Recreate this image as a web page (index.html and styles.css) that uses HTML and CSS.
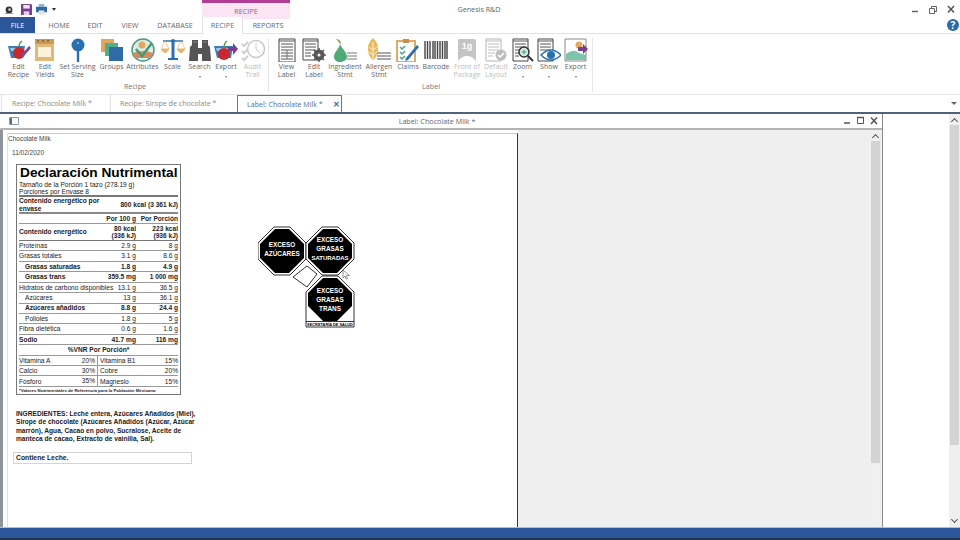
FILE: index.html
```html
<!DOCTYPE html>
<html lang="en">

<head>
    <meta charset="UTF-8">
    <meta name="viewport" content="width=device-width, initial-scale=1.0">
    <title>Genesis R&amp;D</title>
    <link rel="stylesheet" href="styles.css">
</head>

<body>
    <div class="app">
        <div class="titlebar">
            <div class="qat">
                <svg class="qat-logo" viewBox="0 0 8 8"><circle cx="4" cy="4" r="3.4" fill="#333"/><circle cx="4.6" cy="3.6" r="1.3" fill="#cfd8e6"/><path d="M0 7.5h8" stroke="#b9913f"/></svg>
                <svg class="qat-save" viewBox="0 0 12 12"><path d="M0 0h11l1 1v11H0z" fill="#7a3e8e"/><path d="M2.500 1h7v4h-7z" fill="#f1e6f5"/><path d="M3 8h6v4H3z" fill="#e4d3ea"/></svg>
                <svg class="qat-print" viewBox="0 0 12 12"><path d="M3 0h6v3H3z" fill="#8fb4d6"/><path d="M0 3h12v6H0z" fill="#2f6ca6"/><path d="M3 7h6v5H3z" fill="#dfe5ea"/></svg>
                <span class="qat-arrow"></span>
            </div>
            <div class="context-tab">RECIPE</div>
            <div class="app-title">Genesis R&amp;D</div>
            <div class="win-buttons">
                <svg viewBox="-1 0 54 10"><path d="M5 6.500h6" stroke="#666" stroke-width="1.500"/><path d="M22.500 3.500h5v5h-5zM24.500 3.500v-2h5v5h-2" fill="none" stroke="#666"/><path d="M41 1l6 6.500M47 1l-6 6.500" stroke="#555" stroke-width="1.500"/></svg>
            </div>
        </div>

        <div class="tabs">
            <div class="tab tab-file">FILE</div>
            <div class="tab tab-home">HOME</div>
            <div class="tab tab-edit">EDIT</div>
            <div class="tab tab-view">VIEW</div>
            <div class="tab tab-database">DATABASE</div>
            <div class="tab tab-recipe">RECIPE</div>
            <div class="tab tab-reports">REPORTS</div>
            <div class="help">?</div>
        </div>

        <div class="ribbon">
            <div class="group group-recipe">
                <div class="buttons">
                    <div class="rb w27">
                        <svg class="ic" viewBox="0 0 24 24"><path d="M1 8h17l-2 12H4z" fill="#3c7fb8"/><path d="M3 10h13l-1 3H4z" fill="#9cc7e6"/><circle cx="12" cy="15" r="6" fill="#c8282e"/><path d="M12 9q0-4 3-6" stroke="#5d9b4c" stroke-width="1.500" fill="none"/><path d="M15 16l7-8 2 2-7 8-3 1z" fill="#6f4f9a"/></svg>
                        <span>Edit<br>Recipe</span>
                    </div>
                    <div class="rb w26">
                        <svg class="ic" viewBox="0 0 24 24"><path d="M2 1h19v22H2z" fill="#e2b878"/><path d="M2 1h19v5H2z" fill="#c99a57"/><path d="M5 9h13v10H5z" fill="#fdf3dc"/><path d="M4 3h2M9 3h2M14 3h2" stroke="#5b4527"/></svg>
                        <span>Edit<br>Yields</span>
                    </div>
                    <div class="rb w39">
                        <svg class="ic" viewBox="0 0 24 24"><circle cx="12" cy="7" r="6.500" fill="#2a6fb0"/><path d="M10.800 12h2.400v12h-2.400z" fill="#2a6fb0"/><circle cx="12" cy="5" r="1" fill="#9cc7e6"/></svg>
                        <span>Set Serving<br>Size</span>
                    </div>
                    <div class="rb w29">
                        <svg class="ic" viewBox="0 0 24 24"><path d="M1 1h13v13H1z" fill="#e0a75e"/><path d="M5 5h13v13H5z" fill="#4fae8b"/><path d="M9 9h14v14H9z" fill="#2f6ca6"/></svg>
                        <span>Groups</span>
                    </div>
                    <div class="rb w33">
                        <svg class="ic" viewBox="0 0 24 24"><circle cx="12" cy="12" r="11" fill="#dcebe4" stroke="#4f9a85" stroke-width="1.500"/><circle cx="11" cy="7" r="3.500" fill="#e3a95b"/><path d="M2 15q10-4 20 0l-2 5H4z" fill="#d98a5a"/><path d="M5 11l6 7 10-13" fill="none" stroke="#3f9a78" stroke-width="2.500"/></svg>
                        <span>Attributes</span>
                    </div>
                    <div class="rb w27">
                        <svg class="ic" viewBox="0 0 24 24"><path d="M2 3h20" stroke="#2a6fb0" stroke-width="1.500"/><path d="M10.500 2h3v18h-3zM7 20h10v2H7z" fill="#2a6fb0"/><circle cx="12" cy="3" r="2" fill="#2a6fb0"/><path d="M0 11h8q-4 7-8 0zM16 11h8q-4 7-8 0z" fill="#e8b468" stroke="#e8b468"/><path d="M4 3l-4 8M4 3l4 8M20 3l-4 8M20 3l4 8" stroke="#e8b468" stroke-width=".7"/></svg>
                        <span>Scale</span>
                    </div>
                    <div class="rb w27 more">
                        <svg class="ic" viewBox="0 0 24 24"><path d="M1 23l1-14 2-2V2h6v8h4V2h6v5l2 2 1 14h-9v-7h-4v7z" fill="#555"/><path d="M5 4h4M15 4h4" stroke="#888"/></svg>
                        <span>Search</span>
                    </div>
                    <div class="rb w26 more">
                        <svg class="ic" viewBox="0 0 24 24"><path d="M0 8h19l-2 12H3z" fill="#3c7fb8"/><path d="M2 10h14l-1 3H3z" fill="#9cc7e6"/><circle cx="10" cy="16" r="6" fill="#c8282e"/><path d="M10 10q0-5 3-7" stroke="#5d9b4c" stroke-width="1.500" fill="none"/><path d="M14 9h5V5l5 6-5 6v-4h-5z" fill="#7a3e8e"/></svg>
                        <span>Export</span>
                    </div>
                    <div class="rb w27 off">
                        <svg class="ic" viewBox="0 0 24 24"><circle cx="15" cy="11" r="8.500" fill="#fff" stroke="#c8c8c8" stroke-width="1.500"/><path d="M15 5v6l4 4" fill="none" stroke="#c8c8c8"/><path d="M1 6l2 2 4-4M1 13l2 2 4-4M1 20l2 2 4-4" fill="none" stroke="#cdd2c8" stroke-width="2"/></svg>
                        <span>Audit<br>Trail</span>
                    </div>
                </div>
                <div class="group-name">Recipe</div>
            </div>

            <div class="group group-label">
                <div class="buttons">
                    <div class="rb w27">
                        <svg class="ic" viewBox="0 0 24 24"><path d="M4 1h16v23H4z" fill="#fff" stroke="#444"/><path d="M4 3h16M6 6h12M6 9h12M6 12h12M6 15h12M6 18h12M6 21h12" stroke="#555"/><path d="M12 12v9" stroke="#777"/></svg>
                        <span>View<br>Label</span>
                    </div>
                    <div class="rb w28">
                        <svg class="ic" viewBox="0 0 24 24"><path d="M1 1h15v21H1z" fill="#fff" stroke="#444"/><path d="M1 3h15M3 6h11M3 9h11M3 12h11M3 15h6M3 18h6" stroke="#555"/><circle cx="17" cy="17" r="4" fill="none" stroke="#555" stroke-width="3"/><path d="M17 10v14M10 17h14M12 12l10 10M22 12L12 22" stroke="#555" stroke-width="1.500"/><circle cx="17" cy="17" r="1.500" fill="#fff"/></svg>
                        <span>Edit<br>Label</span>
                    </div>
                    <div class="rb w34">
                        <svg class="ic" viewBox="0 0 24 24"><path d="M7 6c-1 5-6 8-6 13 0 3 3 5 6 5s7-2 7-5c0-5-5-8-7-13z" fill="#4faa78"/><path d="M7 6Q5 3 3 1q4 0 5 4" fill="#8ea84c"/><path d="M14 15h10M14 18h10M14 21h10" stroke="#777" stroke-width="1.200"/></svg>
                        <span>Ingredient<br>Stmt</span>
                    </div>
                    <div class="rb w34">
                        <svg class="ic" viewBox="0 0 24 24"><path d="M6 0c4 4 5 7 5 10 0 6-2 10-5 12-3-2-5-6-5-12 0-3 1-6 5-10z" fill="#e9b95e"/><path d="M6 4v17M2 9l4 3 4-3M2 14l4 3 4-3" stroke="#fff3d4" fill="none"/><path d="M10 15h14M10 18h14M10 21h14" stroke="#555"/></svg>
                        <span>Allergen<br>Stmt</span>
                    </div>
                    <div class="rb w24">
                        <svg class="ic" viewBox="0 0 24 24"><path d="M1 3h18v21H1z" fill="#fff" stroke="#e0aa66" stroke-width="2"/><path d="M7 1h6v4H7z" fill="#c98f4a"/><path d="M4 9l2 2 3-3M4 14l2 2 3-3M4 19l2 2 3-3" fill="none" stroke="#4aa08a" stroke-width="1.500"/><path d="M10 20l11-13 2 2-11 13-3 1z" fill="#2a6fb0"/></svg>
                        <span>Claims</span>
                    </div>
                    <div class="rb w32">
                        <svg class="ic" viewBox="0 0 24 24"><path d="M1 3v18M3.500 3v18M6 3v18M9 3v18M11 3v18M13.500 3v18M16 3v18M18.500 3v18M21 3v18M23 3v18" stroke="#444" stroke-width="1.400"/></svg>
                        <span>Barcode</span>
                    </div>
                    <div class="rb w30 off">
                        <svg class="ic" viewBox="0 0 24 24"><path d="M4 1h15q2 0 2 2v20q-4-5-9-5t-9 5V3q0-2 1-2z" fill="#c4c4c4"/><text class="ic-1g" x="12" y="11" text-anchor="middle">1g</text></svg>
                        <span>Front of<br>Package</span>
                    </div>
                    <div class="rb w28 off">
                        <svg class="ic" viewBox="0 0 24 24"><path d="M2 1h15v22H2z" fill="#fff" stroke="#b5b5b5"/><path d="M2 3h15M4 6h11M4 9h11M4 12h11M4 15h7M4 18h5" stroke="#bdbdbd"/><circle cx="17" cy="17" r="5.500" fill="#bdbdbd"/><path d="M14 17l2 2 4-4" stroke="#fff" stroke-width="1.500" fill="none"/></svg>
                        <span>Default<br>Layout</span>
                    </div>
                    <div class="rb w25 more">
                        <svg class="ic" viewBox="0 0 24 24"><path d="M2 1h15v22H2z" fill="#fff" stroke="#444"/><path d="M2 3h15M4 6h11M4 9h11M4 12h5M4 15h4M4 18h4" stroke="#555"/><circle cx="13" cy="14" r="5" fill="#d9eee6" stroke="#333" stroke-width="1.500"/><path d="M13 11.500v5M10.500 14h5" stroke="#3f9a78"/><path d="M17 18l5 5" stroke="#333" stroke-width="2"/></svg>
                        <span>Zoom</span>
                    </div>
                    <div class="rb w28 more">
                        <svg class="ic" viewBox="0 0 24 24"><path d="M1 1h15v22H1z" fill="#fff" stroke="#444"/><path d="M1 3h15M3 6h11M3 9h11M3 12h11" stroke="#555"/><path d="M4 17q10-10 20 0-10 10-20 0z" fill="#fff" stroke="#2a6fb0" stroke-width="1.500"/><circle cx="14" cy="17" r="4" fill="#2a6fb0"/></svg>
                        <span>Show</span>
                    </div>
                    <div class="rb w25 more">
                        <svg class="ic" viewBox="0 0 24 24"><path d="M1 1h21v22H1z" fill="#fff" stroke="#888"/><circle cx="15" cy="7" r="3.500" fill="#e3a95b"/><path d="M2 22v-6q8-6 13-1l7 2v5z" fill="#7cc4ac"/><path d="M14 9h5V6l5 5-5 5v-3h-5z" fill="#7a3e8e"/></svg>
                        <span>Export</span>
                    </div>
                </div>
                <div class="group-name">Label</div>
            </div>
        </div>

        <div class="doc-tabs">
            <div class="doc-tab doc-tab-1">Recipe: Chocolate Milk *</div>
            <div class="doc-tab doc-tab-2">Recipe: Sirope de chocolate *</div>
            <div class="doc-tab doc-tab-3">Label: Chocolate Milk *<span class="doc-close">&#10005;</span></div>
            <span class="doc-arrow"></span>
        </div>

        <div class="main">
            <div class="mdi">
                <div class="mdi-head">
                    <svg class="mdi-icon" viewBox="0 0 10 8"><path d="M.5.500h9v7h-9z" fill="#fff" stroke="#8a97a5"/><path d="M2 1v6" stroke="#5b6b7d" stroke-width="2"/></svg>
                    <span class="mdi-title">Label: Chocolate Milk *</span>
                    <svg class="mdi-btns" viewBox="0 0 36 10"><path d="M0 7h6" stroke="#555" stroke-width="1.500"/><path d="M13.500 1.500h6v6h-6z" fill="none" stroke="#555"/><path d="M13 1.500h7" stroke="#555" stroke-width="1.500"/><path d="M27 1.500l6 6.500M33 1.500L27 8" stroke="#555" stroke-width="1.500"/></svg>
                </div>
                <div class="mdi-body">
                    <div class="gutter"></div>
                    <div class="sheet">
                        <div class="sheet-name">Chocolate Milk</div>
                        <div class="sheet-date">11/02/2020</div>
                        <div class="sheet-cols">
                            <div class="sheet-left">
                                <div class="facts">
                                    <div class="facts-title">Declaración Nutrimental</div>
                                    <div class="facts-serv">Tamaño de la Porción 1 tazo (278.19 g)<br>Porciones por Envase 8</div>
                                    <div class="row row-energy b"><div>Contenido energético por<br>envase</div><div>800 kcal (3 361 kJ)</div></div>
                                    <div class="row row-head b"><div></div><div>Por 100 g</div><div>Por Porción</div></div>
                                    <div class="row row-kcal b"><div>Contenido energético</div><div>80 kcal<br>(336 kJ)</div><div>223 kcal<br>(936 kJ)</div></div>
                                    <div class="row"><div>Proteínas</div><div>2.9 g</div><div>8 g</div></div>
                                    <div class="row"><div>Grasas totales</div><div>3.1 g</div><div>8.6 g</div></div>
                                    <div class="row b in"><div>Grasas saturadas</div><div>1.8 g</div><div>4.9 g</div></div>
                                    <div class="row b in"><div>Grasas trans</div><div>359.5 mg</div><div>1 000 mg</div></div>
                                    <div class="row"><div>Hidratos de carbono disponibles</div><div>13.1 g</div><div>36.5 g</div></div>
                                    <div class="row in"><div>Azúcares</div><div>13 g</div><div>36.1 g</div></div>
                                    <div class="row b in"><div>Azúcares añadidos</div><div>8.8 g</div><div>24.4 g</div></div>
                                    <div class="row in"><div>Polioles</div><div>1.8 g</div><div>5 g</div></div>
                                    <div class="row"><div>Fibra dietética</div><div>0.6 g</div><div>1.6 g</div></div>
                                    <div class="row b"><div>Sodio</div><div>41.7 mg</div><div>116 mg</div></div>
                                    <div class="row-vnr">%VNR Por Porción*</div>
                                    <div class="row row-vit"><div>Vitamina A</div><div class="pct">20%</div><div>Vitamina B1</div><div>15%</div></div>
                                    <div class="row row-vit"><div>Calcio</div><div class="pct">30%</div><div>Cobre</div><div>20%</div></div>
                                    <div class="row row-vit"><div>Fósforo</div><div class="pct">35%</div><div>Magnesio</div><div>15%</div></div>
                                    <div class="facts-note">*Valores Nutrimentales de Referencia para la Población Mexicana</div>
                                </div>
                                <div class="ingredients">INGREDIENTES: Leche entera, Azúcares Añadidos (Miel),<br>Sirope de chocolate (Azúcares Añadidos (Azúcar, Azúcar<br>marrón), Agua, Cacao en polvo, Sucralose, Aceite de<br>manteca de cacao, Extracto de vainilla, Sal).</div>
                                <div class="contains">Contiene Leche.</div>
                            </div>
                            <svg class="seals" viewBox="0 0 100 106">
                                <path d="M35 51L49 40 59 48 49 61z" fill="#fff" stroke="#000" stroke-width=".8"/>
                                <path class="seal-out" d="M16 1h16L48 17v16L32 49H16L0 33V17z"/>
                                <path d="M17 3h14l15 15v14L31 47H17L2 32V18z"/>
                                <path class="seal-out" d="M64 1h16l16 16v16L80 49H64L48 33V17z"/>
                                <path d="M65 3h14l15 15v14L79 47H65L50 32V18z"/>
                                <path class="seal-out" d="M64 50h16l16 16v35H48V66z"/>
                                <path d="M65 52h14l15 15v13L79 95H65L50 80V67z"/>
                                <path d="M48 95.500h48" stroke="#000" stroke-width=".8"/>
                                <text class="seal-t" x="24" y="21.300" text-anchor="middle">EXCESO</text>
                                <text class="seal-t" x="24" y="30.300" text-anchor="middle">AZÚCARES</text>
                                <text class="seal-t" x="72" y="16" text-anchor="middle">EXCESO</text>
                                <text class="seal-t" x="72" y="25.300" text-anchor="middle">GRASAS</text>
                                <text class="seal-t sm" x="72" y="34.300" text-anchor="middle">SATURADAS</text>
                                <text class="seal-t" x="72" y="67" text-anchor="middle">EXCESO</text>
                                <text class="seal-t" x="72" y="76" text-anchor="middle">GRASAS</text>
                                <text class="seal-t" x="72" y="84.600" text-anchor="middle">TRANS</text>
                                <text class="seal-foot" x="72" y="99.500" text-anchor="middle">SECRETARÍA DE SALUD</text>
                                <path d="M85 44v8l2-2 1 3 1.500-.5-1-3h3z" fill="#fff" stroke="#555" stroke-width=".6"/>
                            </svg>
                        </div>
                    </div>
                    <div class="mdi-gray"></div>
                    <div class="scroll">
                        <span class="chev"></span>
                        <div class="thumb thumb-mdi"></div>
                    </div>
                </div>
            </div>
            <div class="side">
                <div class="side-scroll">
                    <span class="chev"></span>
                    <div class="thumb thumb-side"></div>
                    <span class="chev chev-down"></span>
                </div>
            </div>
        </div>

        <div class="status"></div>
    </div>
</body>

</html>
```

FILE: styles.css
```css
* {
    box-sizing: border-box;
}
body {
    margin: 0;
    font-family: "Open Sans", sans-serif;
    background-color: #fff;
    color: #555;
}
.app {
    display: flex;
    flex-direction: column;
    width: 960px;
    height: 540px;
    overflow: hidden;
}

/* title bar */
.titlebar {
    display: grid;
    grid-template-columns: 202px 88px 378px 1fr;
    height: 17px;
    flex: none;
}
.qat {
    display: flex;
    align-items: center;
    padding-left: 5px;
}
.qat-logo {
    width: 8px;
    height: 8px;
    margin-right: 8px;
}
.qat-save {
    width: 11px;
    height: 11px;
    margin-right: 4px;
}
.qat-print {
    width: 11px;
    height: 11px;
    margin-right: 5px;
}
.qat-arrow {
    border-left: 2.5px solid transparent;
    border-right: 2.5px solid transparent;
    border-top: 3px solid #333;
}
.context-tab {
    background-color: #fbe4f3;
    border-top: 3px solid #b03e92;
    font-size: 7.2px;
    line-height: 16px;
    text-align: center;
    color: #8a6a80;
}
.app-title {
    font-size: 7.2px;
    line-height: 18px;
    text-align: center;
    color: #666;
}
.win-buttons {
    display: flex;
    justify-content: flex-end;
    padding: 5px 0 0 0;
}
.win-buttons svg {
    width: 54px;
    height: 10px;
}

/* ribbon tabs */
.tabs {
    display: flex;
    height: 17px;
    flex: none;
    border-bottom: 1px solid #e2e2e2;
}
.tab {
    font-size: 7.2px;
    line-height: 16px;
    text-align: center;
    color: #666;
}
.tab-file {
    width: 35px;
    background-color: #2b579a;
    color: #fff;
}
.tab-home {
    width: 48px;
}
.tab-edit {
    width: 24px;
}
.tab-view {
    width: 46px;
}
.tab-database {
    width: 44px;
    margin-right: 5px;
}
.tab-recipe {
    width: 41px;
    height: 17px;
    background-color: #fff;
    border-left: 1px solid #e2e2e2;
    border-right: 1px solid #e2e2e2;
    color: #5a6f8a;
}
.tab-reports {
    width: 50px;
}
.help {
    width: 12px;
    height: 12px;
    margin: 2px 1px 0 auto;
    border-radius: 50%;
    background-color: #2a6aa8;
    color: #fff;
    font-size: 10px;
    font-weight: bold;
    line-height: 12px;
    text-align: center;
}

/* ribbon */
.ribbon {
    display: flex;
    height: 61px;
    flex: none;
    padding: 4px 0 0 5px;
    border-bottom: 1px solid #e6e6e6;
}
.group {
    display: flex;
    flex-direction: column;
    height: 54px;
    border-right: 1px solid #e6e6e6;
}
.group-recipe {
    width: 264px;
    margin-right: 4px;
}
.group-label {
    width: 320px;
}
.buttons {
    display: flex;
    height: 43px;
}
.group-name {
    font-size: 7.2px;
    line-height: 11px;
    text-align: center;
    color: #777;
    margin-right: 3px;
}
.rb {
    display: flex;
    flex-direction: column;
    align-items: center;
    font-size: 7px;
    line-height: 8px;
    text-align: center;
    color: #666;
    white-space: nowrap;
}
.rb span {
    margin-top: 1px;
}
.ic {
    width: 24px;
    height: 24px;
    flex: none;
}
.off {
    color: #bdbdbd;
}
.more::after {
    content: "";
    margin-top: 5px;
    border-left: 1.5px solid transparent;
    border-right: 1.5px solid transparent;
    border-top: 2px solid #777;
}
.w24 { width: 24px; }
.w25 { width: 25px; }
.w26 { width: 26px; }
.w27 { width: 27px; }
.w28 { width: 28px; }
.w29 { width: 29px; }
.w30 { width: 30px; }
.w32 { width: 32px; }
.w33 { width: 33px; }
.w34 { width: 34px; }
.w39 { width: 39px; }
.ic-1g {
    font-family: "Liberation Sans", sans-serif;
    font-size: 9px;
    font-weight: bold;
    fill: #fff;
}

/* document tabs */
.doc-tabs {
    display: flex;
    align-items: stretch;
    height: 17px;
    flex: none;
    padding-left: 1px;
}
.doc-tab {
    font-size: 7.1px;
    line-height: 16px;
    color: #888;
    padding-left: 10px;
    border-left: 1px solid #e2e2e2;
}
.doc-tab-1 {
    width: 109px;
}
.doc-tab-2 {
    width: 127px;
    padding-left: 9px;
}
.doc-tab-3 {
    display: flex;
    justify-content: space-between;
    width: 105px;
    padding: 0 1px 0 9px;
    border: 1px solid #5b7a99;
    border-bottom: none;
    color: #4f6f92;
}
.doc-close {
    font-size: 8px;
    font-weight: bold;
    color: #4a6a8c;
}
.doc-arrow {
    align-self: center;
    margin-left: auto;
    margin-right: 3px;
    border-left: 3px solid transparent;
    border-right: 3px solid transparent;
    border-top: 3px solid #666;
}

/* main area */
.main {
    display: flex;
    height: 415px;
    flex: none;
    border-top: 2px solid #50627a;
}
.mdi {
    display: flex;
    flex-direction: column;
    width: 883px;
    border-right: 1px solid #8a8a8a;
}
.mdi-head {
    display: flex;
    align-items: center;
    height: 16px;
    flex: none;
    padding: 0 2px 0 9px;
    border-bottom: 2px solid #b4b4b4;
}
.mdi-icon {
    width: 10px;
    height: 8px;
}
.mdi-title {
    flex: 1;
    padding-left: 11px;
    font-size: 7.2px;
    text-align: center;
    color: #666;
}
.mdi-btns {
    width: 36px;
    height: 10px;
}
.mdi-body {
    display: flex;
    flex: 1;
    min-height: 0;
}
.gutter {
    width: 7px;
    border-left: 3px solid #8f949b;
}
.sheet {
    width: 511px;
    margin-top: 3px;
    border-top: 1px solid #c8c8c8;
    border-left: 1px solid #e2e2e2;
    border-right: 1px solid #333;
    color: #222;
    font-family: "Liberation Sans", sans-serif;
}
.sheet-name {
    height: 10px;
    margin-top: 1px;
    font-size: 6.5px;
    line-height: 8px;
    color: #444;
}
.sheet-date {
    height: 19px;
    padding: 3px 0 0 4px;
    font-size: 6.5px;
    line-height: 10px;
    color: #444;
}
.sheet-cols {
    display: flex;
    align-items: flex-start;
}
.sheet-left {
    width: 250px;
    padding-left: 5px;
}
.facts {
    width: 165px;
    height: 231px;
    margin-left: 3px;
    padding: 0 2px 0 2px;
    border: 1px solid #777;
    font-size: 6.6px;
    color: #222;
}
.facts-title {
    height: 16px;
    margin-left: 1px;
    font-size: 13.7px;
    font-weight: bold;
    line-height: 15px;
    white-space: nowrap;
    color: #000;
}
.facts-serv {
    height: 16px;
    border-bottom: 2px solid #777;
    line-height: 7px;
    white-space: nowrap;
}
.row {
    display: grid;
    grid-template-columns: minmax(0, 1fr) 42px 42px;
    align-items: center;
    height: 10.43px;
    border-bottom: 1px solid #999;
    line-height: 7.5px;
    white-space: nowrap;
}
.row > div + div {
    text-align: right;
}
.b {
    font-weight: bold;
}
.in > div:first-child {
    padding-left: 6px;
}
.row-energy {
    height: 17px;
    border-bottom-width: 2px;
    border-bottom-color: #888;
    grid-template-columns: minmax(0, 1fr) 60px;
}
.row-head {
    height: 10px;
}
.row-kcal {
    height: 17px;
    border-bottom-color: #777;
}
.row-vnr {
    height: 10.43px;
    border-bottom: 1px solid #999;
    font-weight: bold;
    line-height: 9px;
    text-align: center;
}
.row-vit {
    grid-template-columns: 56px 23px minmax(0, 1fr) 30px;
}
.row-vit .pct {
    height: 100%;
    padding-right: 2px;
    border-right: 1px solid #999;
    line-height: 10px;
}
.row-vit > div:nth-child(3) {
    padding-left: 2px;
    text-align: left;
}
.facts-note {
    font-size: 4.4px;
    font-weight: bold;
    line-height: 8px;
    white-space: nowrap;
}
.ingredients {
    margin-top: 15px;
    margin-left: 3px;
    font-size: 6.6px;
    font-weight: bold;
    line-height: 8.3px;
    white-space: nowrap;
    color: #222;
}
.contains {
    width: 179px;
    height: 12px;
    margin-top: 9px;
    padding-left: 2px;
    border: 1px solid #d4d4d4;
    font-size: 6.8px;
    font-weight: bold;
    line-height: 10px;
    color: #222;
}
.seals {
    width: 100px;
    height: 106px;
    margin-top: 62px;
}
.seal-out {
    fill: #fff;
    stroke: #000;
    stroke-width: .8;
}
.seal-t {
    font-family: "Liberation Sans", sans-serif;
    font-size: 6.4px;
    font-weight: bold;
    fill: #fff;
}
.seal-t.sm {
    font-size: 6px;
}
.seal-foot {
    font-family: "Liberation Sans", sans-serif;
    font-size: 3.9px;
    font-weight: bold;
    fill: #000;
}
.mdi-gray {
    flex: 1;
    background-color: #efefef;
}
.scroll {
    display: flex;
    flex-direction: column;
    align-items: center;
    width: 13px;
    background-color: #f0f0f0;
}
.chev {
    width: 5px;
    height: 5px;
    margin-top: 5px;
    border-left: 1px solid #555;
    border-top: 1px solid #555;
    transform: rotate(45deg);
    flex: none;
}
.chev-down {
    margin-top: auto;
    margin-bottom: 5px;
    transform: rotate(225deg);
}
.thumb {
    width: 9px;
    background-color: #d3d3d3;
    flex: none;
}
.thumb-mdi {
    height: 322px;
    margin-top: 1px;
}
.side {
    display: flex;
    justify-content: flex-end;
    flex: 1;
}
.side-scroll {
    display: flex;
    flex-direction: column;
    align-items: center;
    width: 11px;
    background-color: #efefef;
}
.thumb-side {
    height: 320px;
    margin-top: 1px;
}
.status {
    flex: 1;
    border-top: 1px solid #a9c0d8;
    border-bottom: 2px solid #22344f;
    background-color: #2b579a;
}
```
